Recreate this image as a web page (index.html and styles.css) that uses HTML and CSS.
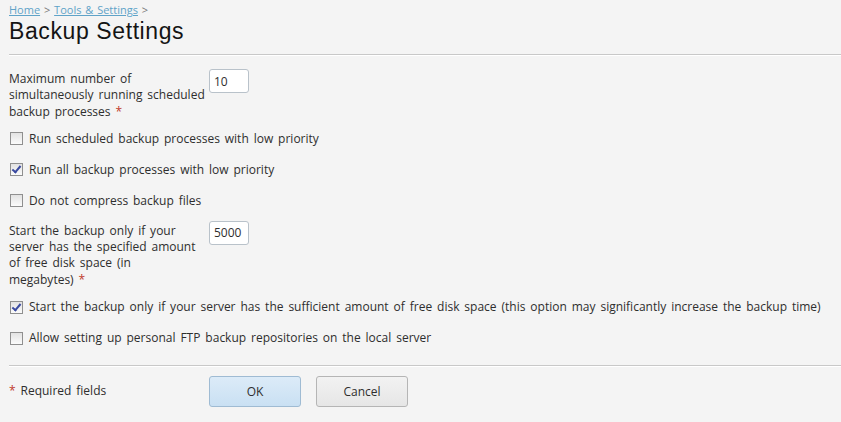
FILE: index.html
```html
<!DOCTYPE html>
<html>
<head>
<meta charset="utf-8">
<link rel="stylesheet" href="styles.css">
</head>
<body>
<div class="page">
  <div class="header">
    <div class="crumbs"><a href="#">Home</a> &gt; <a href="#">Tools &amp; Settings</a> &gt;</div>
    <h1 class="title">Backup Settings</h1>
  </div>
  <form class="form">
    <div class="field">
      <label class="field-label">Maximum number of simultaneously running scheduled backup processes&nbsp;<span class="req">*</span></label>
      <input class="text-input" type="text" value="10">
    </div>
    <label class="check-row"><span class="box"></span>Run scheduled backup processes with low priority</label>
    <label class="check-row"><span class="box checked"></span>Run all backup processes with low priority</label>
    <label class="check-row"><span class="box"></span>Do not compress backup files</label>
    <div class="field">
      <label class="field-label">Start the backup only if your server has the specified amount of free disk space (in megabytes)&nbsp;<span class="req">*</span></label>
      <input class="text-input" type="text" value="5000">
    </div>
    <label class="check-row"><span class="box checked"></span>Start the backup only if your server has the sufficient amount of free disk space (this option may significantly increase the backup time)</label>
    <label class="check-row"><span class="box"></span>Allow setting up personal FTP backup repositories on the local server</label>
    <div class="footer">
      <div class="required"><span class="req">*</span> Required fields</div>
      <div class="buttons">
        <button type="button" class="btn btn-primary">OK</button>
        <button type="button" class="btn">Cancel</button>
      </div>
    </div>
  </form>
</div>
</body>
</html>
```
FILE: styles.css
```css
html, body {
  margin: 0;
  padding: 0;
  background: #f4f4f4;
}
body {
  font-family: "Open Sans", "DejaVu Sans", sans-serif;
  font-size: 12px;
  word-spacing: 1.8px;
  color: #2e2e2e;
}
.page {
  padding: 3px 0 0 9px;
}
.header {
  border-bottom: 1px solid #c8c8c8;
  box-shadow: 0 1px 0 #fff;
  padding: 0 0 9px;
}
.crumbs {
  font-size: 11px;
  color: #777;
  line-height: 14px;
  word-spacing: 1px;
}
.crumbs a {
  color: #5fa3c8;
  text-decoration: underline;
}
.title {
  margin: 0;
  font-family: "Liberation Sans", Arial, sans-serif;
  font-weight: normal;
  font-size: 23px;
  letter-spacing: 0.6px;
  word-spacing: 0;
  line-height: 28px;
  color: #141414;
}
.form {
  margin: 0;
  padding: 14px 0 0 0;
}
.field {
  display: flex;
  align-items: flex-start;
  margin-bottom: 10px;
}
.check-row + .field {
  margin-top: -2px;
}
.field-label {
  width: 197px;
  margin-right: 3px;
  line-height: 16.3px;
  padding-top: 2px;
}
.req {
  color: #c0392b;
}
.text-input {
  box-sizing: border-box;
  width: 40px;
  height: 24px;
  border: 1px solid #b9c2ca;
  border-radius: 3px;
  background: #fff;
  font: inherit;
  color: #2e2e2e;
  padding: 0 4px;
  margin-left: 0;
}
.check-row {
  display: flex;
  align-items: center;
  height: 18px;
  line-height: 16px;
  margin-bottom: 13px;
}
.box {
  box-sizing: border-box;
  width: 13px;
  height: 13px;
  border: 1px solid #8f8f8f;
  background: linear-gradient(#e2e2e2, #fbfbfb);
  margin: 0 6px 0 1px;
  position: relative;
  flex: none;
}
.box.checked::after {
  content: "";
  position: absolute;
  left: 3px;
  top: 0px;
  width: 3px;
  height: 7px;
  border: solid #3a4aa0;
  border-width: 0 2px 2px 0;
  transform: rotate(40deg);
}
.footer {
  display: flex;
  align-items: flex-start;
  border-top: 1px solid #c8c8c8;
  box-shadow: inset 0 1px 0 #fff;
  margin-top: 18px;
  padding-top: 10px;
}
.required {
  width: 200px;
  padding-top: 6px;
}
.buttons {
  display: flex;
  gap: 15px;
}
.btn {
  box-sizing: border-box;
  width: 92px;
  height: 31px;
  border: 1px solid #b5b5b5;
  border-radius: 3px;
  background: linear-gradient(#f2f2f2, #e6e6e6);
  font: inherit;
  word-spacing: 0;
  color: #2e2e2e;
}
.btn-primary {
  border-color: #9fbbd3;
  background: linear-gradient(#dcebf8, #c9e0f3);
}
```
